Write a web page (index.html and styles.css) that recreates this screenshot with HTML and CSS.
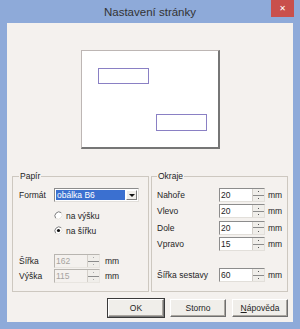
FILE: index.html
```html
<!DOCTYPE html>
<html lang="cs">

<head>
    <meta charset="UTF-8">
    <title>Nastavení stránky</title>
    <link rel="stylesheet" href="styles.css">
</head>

<body>
    <div class="window">
        <div class="titlebar">
            <span class="title">Nastavení stránky</span>
            <button class="close">✕</button>
        </div>

        <div class="client">
            <div class="preview">
                <div class="page">
                    <div class="block block-top"></div>
                    <div class="block block-bottom"></div>
                </div>
            </div>

            <div class="groups">
                <fieldset class="group">
                    <legend>Papír</legend>

                    <div class="row row-format">
                        <span class="label label-paper">Formát</span>
                        <div class="combo">
                            <span class="combo-value">obálka B6</span>
                            <span class="combo-btn"><span class="tri-down"></span></span>
                        </div>
                    </div>

                    <div class="radios">
                        <label class="radio">
                            <svg width="9" height="9" viewBox="0 0 9 9">
                                <circle cx="4.5" cy="4.5" r="4" fill="#fff" />
                                <path d="M1.7 7.3 A4 4 0 0 1 7.3 1.7" fill="none" stroke="#7a7a7a" stroke-width="1" />
                                <path d="M7.3 1.7 A4 4 0 0 1 1.7 7.3" fill="none" stroke="#e4e0da" stroke-width="1" />
                            </svg>
                            na výšku
                        </label>
                        <label class="radio">
                            <svg width="9" height="9" viewBox="0 0 9 9">
                                <circle cx="4.5" cy="4.5" r="4" fill="#fff" />
                                <path d="M1.7 7.3 A4 4 0 0 1 7.3 1.7" fill="none" stroke="#7a7a7a" stroke-width="1" />
                                <path d="M7.3 1.7 A4 4 0 0 1 1.7 7.3" fill="none" stroke="#e4e0da" stroke-width="1" />
                                <circle cx="4.5" cy="4.5" r="1.6" fill="#111" />
                            </svg>
                            na šířku
                        </label>
                    </div>

                    <div class="row row-size">
                        <span class="label label-paper">Šířka</span>
                        <div class="spinbox disabled">
                            <span class="spin-value">162</span>
                            <span class="spin"><span class="tri-up"></span><span class="tri-down"></span></span>
                        </div>
                        <span class="unit unit-paper">mm</span>
                    </div>
                    <div class="row">
                        <span class="label label-paper">Výška</span>
                        <div class="spinbox disabled">
                            <span class="spin-value">115</span>
                            <span class="spin"><span class="tri-up"></span><span class="tri-down"></span></span>
                        </div>
                        <span class="unit unit-paper">mm</span>
                    </div>
                </fieldset>

                <fieldset class="group">
                    <legend>Okraje</legend>

                    <div class="margins">
                        <div class="row">
                            <span class="label label-margin">Nahoře</span>
                            <div class="spinbox">
                                <span class="spin-value">20</span>
                                <span class="spin"><span class="tri-up"></span><span class="tri-down"></span></span>
                            </div>
                            <span class="unit">mm</span>
                        </div>
                        <div class="row">
                            <span class="label label-margin">Vlevo</span>
                            <div class="spinbox">
                                <span class="spin-value">20</span>
                                <span class="spin"><span class="tri-up"></span><span class="tri-down"></span></span>
                            </div>
                            <span class="unit">mm</span>
                        </div>
                        <div class="row">
                            <span class="label label-margin">Dole</span>
                            <div class="spinbox">
                                <span class="spin-value">20</span>
                                <span class="spin"><span class="tri-up"></span><span class="tri-down"></span></span>
                            </div>
                            <span class="unit">mm</span>
                        </div>
                        <div class="row">
                            <span class="label label-margin">Vpravo</span>
                            <div class="spinbox">
                                <span class="spin-value">15</span>
                                <span class="spin"><span class="tri-up"></span><span class="tri-down"></span></span>
                            </div>
                            <span class="unit">mm</span>
                        </div>
                    </div>

                    <div class="row row-width">
                        <span class="label label-margin">Šířka sestavy</span>
                        <div class="spinbox">
                            <span class="spin-value">60</span>
                            <span class="spin"><span class="tri-up"></span><span class="tri-down"></span></span>
                        </div>
                        <span class="unit">mm</span>
                    </div>
                </fieldset>
            </div>

            <div class="buttons">
                <button class="btn btn-default">OK</button>
                <button class="btn">Storno</button>
                <button class="btn"><u>N</u>ápověda</button>
            </div>
        </div>
    </div>
</body>

</html>
```

FILE: styles.css
```css
body {
    margin: 0;
    padding: 0;
    font-family: "Liberation Sans", Arial, sans-serif;
    font-size: 8.5px;
    color: #1e1e1e;
}

.window {
    width: 300px;
    height: 329px;
    background: #8eaad9;
    display: flex;
    flex-direction: column;
    box-sizing: border-box;
    padding: 0 7px 7px;
}

.titlebar {
    height: 23px;
    flex: none;
    display: flex;
    align-items: center;
    justify-content: center;
    position: relative;
}

.title {
    font-size: 11.5px;
    color: #333;
    margin-top: 1px;
}

.close {
    position: absolute;
    top: 0;
    right: -1px;
    width: 23px;
    height: 17px;
    border: none;
    padding: 0;
    background: #c9504c;
    color: #fff;
    font-size: 8px;
    font-weight: bold;
    font-family: "DejaVu Sans", sans-serif;
}

.client {
    flex: 1;
    background: #f4f1ee;
    display: flex;
    flex-direction: column;
    padding: 0 5px;
}

.preview {
    height: 147px;
    flex: none;
    display: flex;
    justify-content: center;
    padding-top: 27px;
    box-sizing: border-box;
}

.page {
    width: 139px;
    height: 99px;
    box-sizing: border-box;
    background: #fff;
    border-left: 1px solid #bdb6b4;
    border-top: 1px solid #bdb6b4;
    border-right: 2px solid #767676;
    border-bottom: 2px solid #767676;
    position: relative;
}

.block {
    position: absolute;
    width: 51px;
    height: 16px;
    box-sizing: border-box;
    border: 1px solid #8a80c4;
}

.block-top {
    left: 16px;
    top: 17px;
}

.block-bottom {
    left: 74px;
    top: 63px;
    height: 17px;
}

.groups {
    display: flex;
    gap: 2px;
    height: 122px;
    flex: none;
}

.group {
    width: 137px;
    margin: 0;
    padding: 0 0 0 6px;
    box-sizing: border-box;
    border: 1px solid #cdc8c0;
    min-width: 0;
}

.group legend {
    padding: 0 1px;
    margin-left: 0;
    line-height: 12px;
}

.group:last-child {
    padding-left: 5px;
}

.row {
    display: flex;
    align-items: center;
    height: 14px;
}

.row-format {
    margin-top: 6px;
}

.label-paper {
    width: 35px;
}

.label-margin {
    width: 62px;
}

.combo {
    width: 85px;
    height: 14px;
    box-sizing: border-box;
    background: #fff;
    border: 1px solid;
    border-color: #8c8c8c #e2dfda #e2dfda #8c8c8c;
    display: flex;
    padding: 1px;
}

.combo-value {
    flex: 1;
    background: #3b70d0;
    color: #fff;
    line-height: 10px;
    padding-left: 1px;
}

.combo-btn {
    width: 11px;
    background: #f0eeea;
    border: 1px solid;
    border-color: #fff #7c7c7c #7c7c7c #fff;
    box-sizing: border-box;
    display: flex;
    align-items: center;
    justify-content: center;
    margin-left: 1px;
}

.combo-btn .tri-down {
    border-left: 3.5px solid transparent;
    border-right: 3.5px solid transparent;
    border-top: 3.5px solid #111;
}

.radios {
    display: flex;
    flex-direction: column;
    gap: 4px;
    margin: 8px 0 0 35px;
}

.radio {
    display: flex;
    align-items: center;
    gap: 3px;
    height: 11px;
}

.row-size {
    margin-top: 18px;
}

.row-size + .row {
    margin-top: 1px;
}

.spinbox {
    width: 46px;
    height: 14px;
    box-sizing: border-box;
    background: #fff;
    border: 1px solid;
    border-color: #8c8c8c #e2dfda #e2dfda #8c8c8c;
    display: flex;
}

.spinbox.disabled {
    background: #f4f1ee;
    color: #a6a39f;
    border-color: #b8b5b0 #e8e5e0 #e8e5e0 #b8b5b0;
}

.spin-value {
    flex: 1;
    line-height: 12px;
    padding-left: 1px;
}

.spin {
    width: 11px;
    display: flex;
    flex-direction: column;
    background: #f0eeea;
    border-left: 1px solid #d4d0ca;
}

.spin span {
    flex: 1;
    display: flex;
    justify-content: center;
    align-items: center;
}

.spin .tri-up::before,
.spin .tri-down::before {
    content: "";
    width: 1px;
    height: 1px;
    background: #555;
}

.spin .tri-up {
    border-bottom: 1px solid #8c8c8c;
}

.disabled .spin .tri-up::before,
.disabled .spin .tri-down::before {
    background: #aaa;
}

.unit {
    margin-left: 3px;
}

.unit-paper {
    margin-left: 5px;
}

.margins {
    display: flex;
    flex-direction: column;
    gap: 2.4px;
    margin-top: 6px;
}

.row-width {
    margin-top: 17px;
}

.buttons {
    display: flex;
    justify-content: flex-end;
    gap: 6px;
    margin-top: 7px;
}

.btn {
    width: 56px;
    height: 18px;
    padding: 0;
    font-family: "Liberation Sans", Arial, sans-serif;
    font-size: 8.5px;
    color: #1e1e1e;
    background: #f0eeea;
    border: 1px solid;
    border-color: #fff #6f6f6f #6f6f6f #fff;
    box-shadow: inset -1px -1px 0 #aaa6a0;
}

.btn-default {
    outline: 1px solid #3a3a3a;
    outline-offset: 0;
    border-color: #fff #7a7a7a #7a7a7a #fff;
}
```
